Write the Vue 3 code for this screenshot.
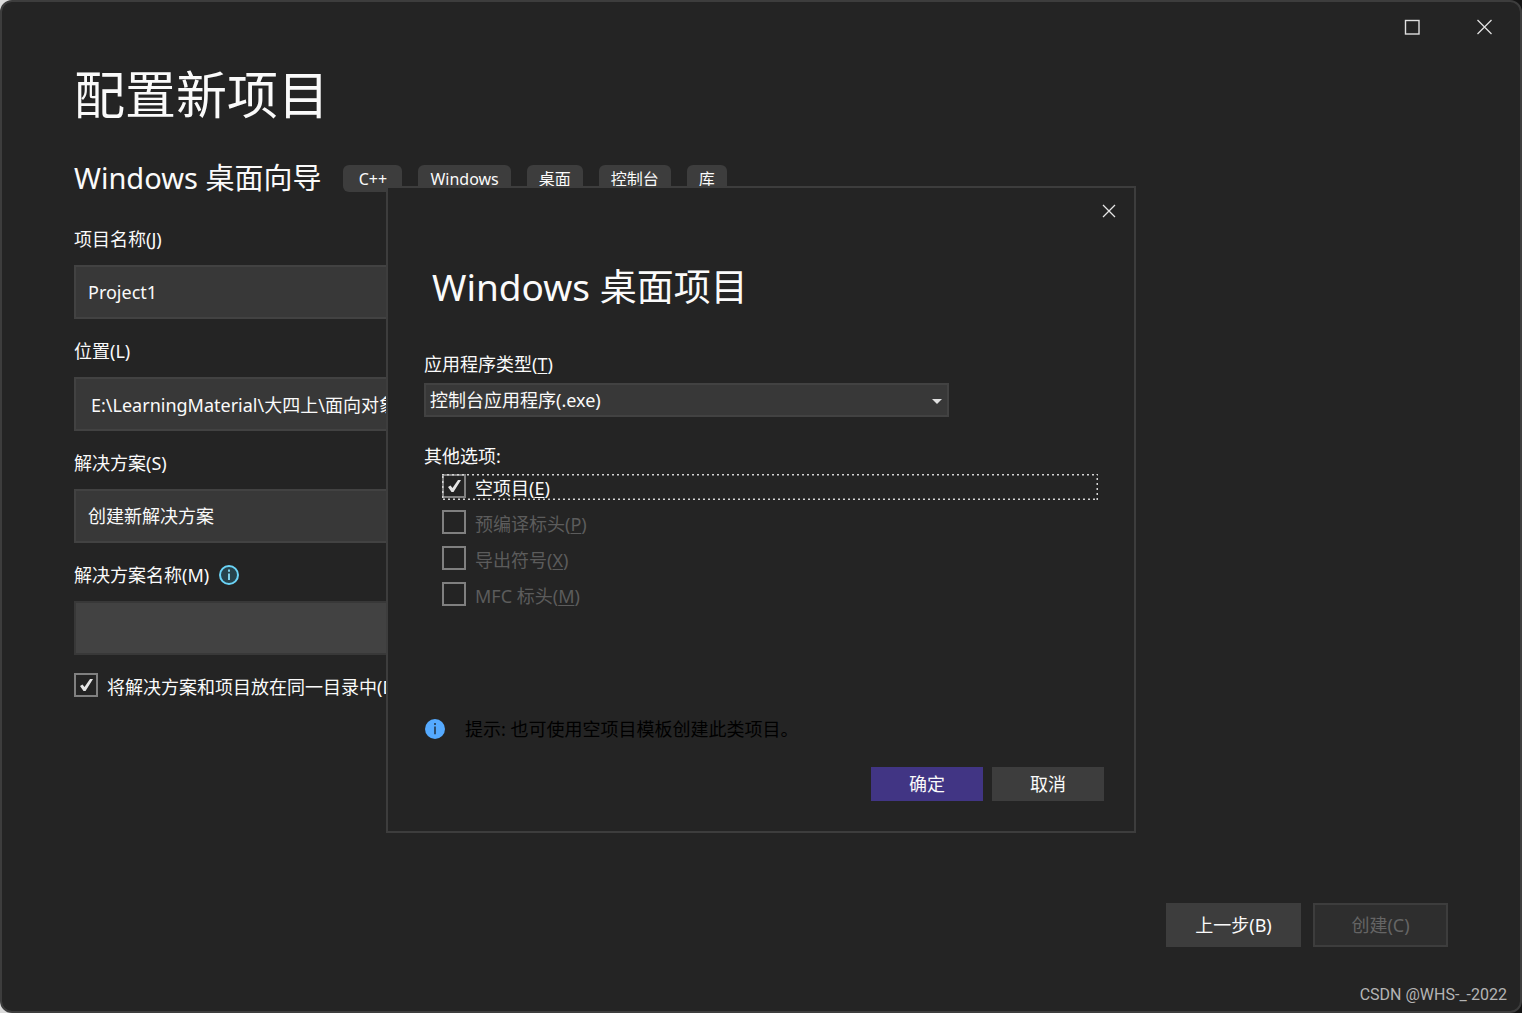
<script setup>
import { ref } from 'vue'

const tags = ['C++', 'Windows', '桌面', '控制台', '库']
const projectName = ref('Project1')
const location = ref('E:\\LearningMaterial\\大四上\\面向对象')
const solution = ref('创建新解决方案')
const solutionName = ref('')
const sameFolder = ref(true)
const appType = ref('控制台应用程序(.exe)')
const options = ref([
  { id: 'empty', text: '空项目', key: 'E', checked: true, disabled: false },
  { id: 'pch', text: '预编译标头', key: 'P', checked: false, disabled: true },
  { id: 'export', text: '导出符号', key: 'X', checked: false, disabled: true },
  { id: 'mfc', text: 'MFC 标头', key: 'M', checked: false, disabled: true }
])
</script>

<template>
  <div class="desktop">
    <div class="window">
      <div class="window-controls">
        <button type="button" aria-label="最大化">
          <svg width="16" height="16" viewBox="0 0 16 16"><rect x="1.5" y="1.5" width="13.5" height="13.5" fill="none" stroke="#e0e0e0" stroke-width="1.4" /></svg>
        </button>
        <button type="button" aria-label="关闭">
          <svg width="16" height="16" viewBox="0 0 16 16"><path d="M1.5 1L15.5 15M15.5 1L1.5 15" stroke="#e0e0e0" stroke-width="1.3" /></svg>
        </button>
      </div>

      <main class="content">
        <h1>配置新项目</h1>
        <div class="template-row">
          <h2>Windows 桌面向导</h2>
          <ul class="tags">
            <li v-for="tag in tags" :key="tag">{{ tag }}</li>
          </ul>
        </div>

        <form class="form" @submit.prevent>
          <div class="field">
            <label for="name">项目名称(J)</label>
            <input id="name" v-model="projectName" type="text" />
          </div>
          <div class="field">
            <label for="location">位置(L)</label>
            <input id="location" v-model="location" class="path" type="text" />
          </div>
          <div class="field">
            <label for="solution">解决方案(S)</label>
            <select id="solution" v-model="solution">
              <option>创建新解决方案</option>
            </select>
          </div>
          <div class="field">
            <label for="solution-name">
              解决方案名称(M)
              <svg width="20" height="20" viewBox="0 0 20 20">
                <circle cx="10" cy="10" r="9" fill="#27434c" stroke="#6bd4f7" stroke-width="2" />
                <path d="M10 8.5V15M10 4.6V6.8" stroke="#8be0fa" stroke-width="1.8" />
              </svg>
            </label>
            <input id="solution-name" v-model="solutionName" type="text" disabled />
          </div>
          <label class="check">
            <input v-model="sameFolder" type="checkbox" />
            <span>将解决方案和项目放在同一目录中(D)</span>
          </label>
        </form>
      </main>

      <footer class="footer">
        <button type="button">上一步(B)</button>
        <button type="button" disabled>创建(C)</button>
      </footer>
      <div class="watermark">CSDN @WHS-_-2022</div>
    </div>

    <div class="overlay">
      <section class="dialog" role="dialog" aria-labelledby="dialog-title">
        <button class="dialog-close" type="button" aria-label="关闭">
          <svg width="14" height="14" viewBox="0 0 14 14"><path d="M1 1L13 13M13 1L1 13" stroke="#e6e6e6" stroke-width="1.3" /></svg>
        </button>
        <h2 id="dialog-title">Windows 桌面项目</h2>
        <label class="caption" for="app-type">应用程序类型(<u>T</u>)</label>
        <div class="combo">
          <select id="app-type" v-model="appType">
            <option>控制台应用程序(.exe)</option>
          </select>
          <svg width="10" height="5" viewBox="0 0 10 5"><path d="M0 0H10L5 5Z" fill="#e0e0e0" /></svg>
        </div>
        <fieldset>
          <legend class="caption">其他选项:</legend>
          <label
            v-for="option in options"
            :key="option.id"
            class="check"
            :class="{ disabled: option.disabled }"
          >
            <input v-model="option.checked" type="checkbox" :disabled="option.disabled" />
            <span>{{ option.text }}(<u>{{ option.key }}</u>)</span>
            <svg v-if="option.checked" class="focus-ring" aria-hidden="true">
              <rect width="100%" height="100%" />
            </svg>
          </label>
        </fieldset>
        <p class="tip">
          <svg width="20" height="20" viewBox="0 0 20 20">
            <circle cx="10" cy="10" r="10" fill="#55aaff" />
            <path d="M10 7.6V15.2M10 4V6" stroke="#1c2733" stroke-width="1.4" />
          </svg>
          提示: 也可使用空项目模板创建此类项目。
        </p>
        <div class="actions">
          <button class="primary" type="button">确定</button>
          <button type="button">取消</button>
        </div>
      </section>
    </div>
  </div>
</template>

<style>
body {
  margin: 0;
  background: #242424;
}
</style>

<style scoped>
* {
  box-sizing: border-box;
}

.desktop {
  position: relative;
  min-height: 100vh;
  display: flex;
  background: linear-gradient(90deg, #dcdcdc 50%, #151515 50%);
  color: #fafafa;
  font-family: "Noto Sans", "Noto Sans CJK SC", sans-serif;
  font-size: 18px;
  line-height: 26px;
}

h1,
h2,
p,
ul,
fieldset {
  margin: 0;
  padding: 0;
  border: 0;
  font-weight: 400;
}

button,
input,
select {
  margin: 0;
  color: inherit;
  font: inherit;
}

button {
  padding: 0;
  border: 0;
  background: #3d3d3d;
}

svg {
  display: block;
  flex: none;
}

.window {
  flex: 1;
  display: flex;
  flex-direction: column;
  border: 2px solid #3d3d3d;
  border-radius: 12px;
  background: #242424;
}

.window-controls {
  display: flex;
  justify-content: flex-end;
}

.window-controls button {
  display: grid;
  place-items: center;
  width: 72px;
  height: 50px;
  background: none;
}

.content {
  flex: 1;
  padding: 8px 72px 0;
}

h1 {
  font-size: 51px;
  line-height: 68px;
}

.template-row {
  display: flex;
  align-items: center;
  gap: 22px;
  height: 40px;
  margin: 30px 0 9px;
}

.template-row h2 {
  font-size: 29px;
  line-height: 40px;
}

.tags {
  display: flex;
  gap: 16px;
  list-style: none;
  font-size: 16px;
  line-height: 28px;
  text-align: center;
}

.tags li {
  min-width: 40px;
  height: 27px;
  padding: 0 12px;
  border-radius: 6px;
  background: #3d3d3d;
}

.tags li:first-child {
  min-width: 59px;
}

.form {
  width: 56%;
}

.field label {
  display: flex;
  align-items: center;
  gap: 10px;
  padding: 19px 0 13px;
}

.field input,
.field select {
  display: block;
  appearance: none;
  width: 100%;
  height: 54px;
  padding: 0 12px;
  border: 2px solid #424242;
  border-radius: 0;
  background: #383838;
}

.field .path {
  padding-left: 15px;
}

.field input:disabled {
  border-color: #383838;
  background: #424242;
}

.check {
  position: relative;
  display: flex;
  gap: 9px;
  height: 26px;
  white-space: nowrap;
}

.check span {
  line-height: 28px;
}

.check input {
  flex: none;
  appearance: none;
  width: 24px;
  height: 24px;
  border: 2px solid #808080;
  background: #242424;
}

.check input:checked {
  background: url("data:image/svg+xml,%3Csvg xmlns='http://www.w3.org/2000/svg' viewBox='0 0 20 20'%3E%3Cpath d='M4 11L6.500 9.500L8.500 12L14 4H17L9.500 16H7.500Z' fill='%23e6e6e6'/%3E%3C/svg%3E") center / 20px 20px no-repeat;
}

.form .check {
  margin-top: 18px;
}

.footer {
  display: flex;
  justify-content: flex-end;
  gap: 12px;
  padding: 0 72px;
}

.footer button {
  width: 135px;
  height: 44px;
}

.footer button:disabled {
  border: 2px solid #3d3d3d;
  background: #2e2e2e;
  color: #656565;
}

.watermark {
  padding: 36px 13px 4px;
  color: #b4b4b4;
  font-family: Roboto, "Liberation Sans", sans-serif;
  font-size: 16px;
  line-height: 24px;
  text-align: right;
}

.overlay {
  position: absolute;
  inset: 0;
  display: flex;
  align-items: center;
  justify-content: center;
  padding-top: 6px;
}

.dialog {
  position: relative;
  display: flex;
  flex-direction: column;
  width: 750px;
  max-width: 100%;
  padding: 72px 30px 30px 36px;
  border: 2px solid #3d3d3d;
  background: #242424;
}

.dialog-close {
  position: absolute;
  top: 7px;
  right: 9px;
  display: grid;
  place-items: center;
  width: 32px;
  height: 32px;
  background: none;
}

.dialog h2 {
  padding-left: 8px;
  font-size: 37px;
  line-height: 54px;
}

.caption {
  padding: 0;
  line-height: 26px;
}

.dialog h2 + .caption {
  margin-top: 37px;
}

.combo {
  position: relative;
  width: 525px;
  max-width: 100%;
  margin: 6px 0 26px;
}

.combo select {
  display: block;
  appearance: none;
  width: 100%;
  height: 34px;
  padding: 0 4px;
  border: 2px solid #424242;
  border-radius: 0;
  background: #383838;
}

.combo svg {
  position: absolute;
  top: 16px;
  right: 7px;
  pointer-events: none;
}

fieldset {
  min-width: 0;
}

fieldset .check {
  margin: 0 6px 10px 18px;
}

fieldset .caption {
  margin-bottom: 5px;
}

.focus-ring {
  position: absolute;
  inset: 0;
  width: 100%;
  height: 100%;
  pointer-events: none;
}

.focus-ring rect {
  fill: none;
  stroke: #d4d4d4;
  stroke-width: 3px;
  stroke-dasharray: 2 3;
}

u {
  text-decoration-thickness: 1px;
  text-underline-offset: 2px;
}

.disabled {
  color: #5c5c5c;
}

.tip {
  display: flex;
  align-items: center;
  gap: 20px;
  margin: 98px 0 25px 1px;
  color: #000;
}

.actions {
  display: flex;
  justify-content: flex-end;
  gap: 9px;
}

.actions button {
  width: 112px;
  height: 34px;
}

.actions .primary {
  background: #413584;
}
</style>
